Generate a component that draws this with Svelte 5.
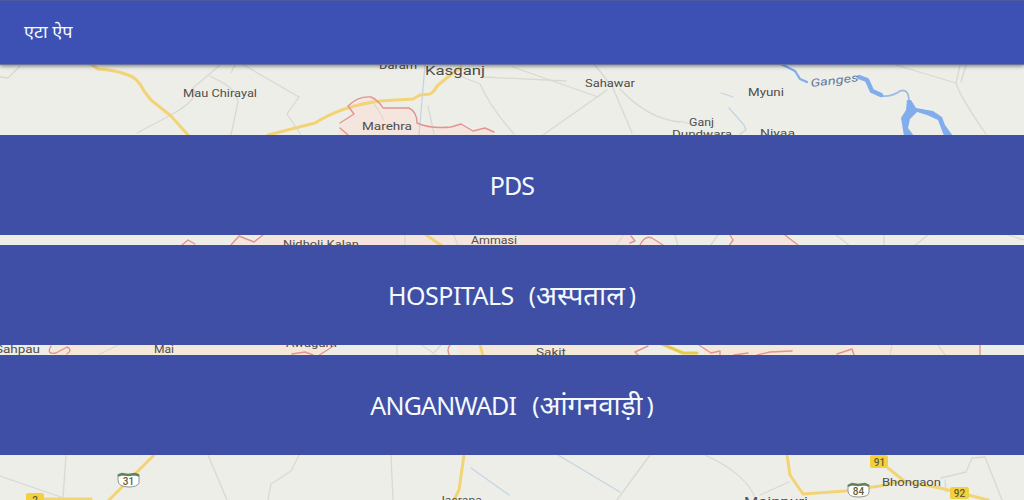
<script>
  const services = [
    { id: 'pds', en: 'PDS', hi: '' },
    { id: 'hospitals', en: 'HOSPITALS', hi: 'अस्पताल' },
    { id: 'anganwadi', en: 'ANGANWADI', hi: 'आंगनवाड़ी' }
  ];

  const places = [
    { name: 'Daram', x: 379, y: 69, w: 38, size: 10 },
    { name: 'Kasganj', x: 425, y: 75, w: 60, size: 13 },
    { name: 'Mau Chirayal', x: 183, y: 97, w: 74, size: 10.5 },
    { name: 'Marehra', x: 362, y: 130, w: 50, size: 10.5 },
    { name: 'Sahawar', x: 585, y: 87, w: 50, size: 10 },
    { name: 'Myuni', x: 748, y: 96, w: 36, size: 10.5 },
    { name: 'Ganj', x: 689, y: 126, w: 25, size: 10 },
    { name: 'Dundwara', x: 672, y: 138, w: 60, size: 10 },
    { name: 'Niyaa', x: 760, y: 137, w: 35, size: 10.5 },
    { name: 'Nidholi Kalan', x: 283, y: 248, w: 76, size: 10.5 },
    { name: 'Ammasi', x: 471, y: 244, w: 46, size: 10 },
    { name: 'Sahpau', x: -5, y: 353, w: 45, size: 10 },
    { name: 'Mai', x: 154, y: 353, w: 20, size: 10 },
    { name: 'Awagarh', x: 286, y: 347, w: 51, size: 10.5 },
    { name: 'Sakit', x: 536, y: 356, w: 30, size: 10.5 },
    { name: 'Jasrana', x: 438, y: 504, w: 44, size: 11 },
    { name: 'Mainpuri', x: 744, y: 506, w: 64, size: 13.5 },
    { name: 'Bhongaon', x: 882, y: 486, w: 59, size: 10.5 }
  ];
</script>

<div class="app">
  <svg class="map" viewBox="0 0 1024 500" aria-hidden="true">
    <rect width="1024" height="500" fill="#eeeee8" />

    <g fill="#f4e5de">
      <path d="M338 137 L340 126 L353 115 L348 107 L367 97 L382 109 L409 108 L417 124 L452 128 L460 124 L474 131 L486 128 L494 132 V137Z" />
      <path d="M182 246 L188 240 L195 245 L230 246 L238 236 L252 242 L268 234 H620 L634 236 L633 242 L628 246Z" />
      <path d="M640 246 L647 236 L664 246Z" />
      <path d="M730 234 H785 L798 246 H733Z" />
    </g>
    <g fill="#f4e8d9">
      <path d="M50 344 H330 L318 356 H55Z M455 344 H640 L635 356 H460Z M704 344 H980 V356 H704Z" />
    </g>

    <g class="line" stroke="#d9d9d3" stroke-width="1.3">
      <path d="M0 77 L8 78 L20 66 M137 133 L171 115 Q201 98 193 88 L220 65 M210 76 L225 84 Q237 92 238 102 L231 135 M235 65 L231 73 M242 64 L299 97 L287 114 L301 135" />
      <path d="M372 100 L384 120 M460 76 L480 84 Q490 107 514 134 M428 106 L434 134" />
      <path d="M483 77 L566 81 M513 67 L598 97 M543 135 L607 90 M595 65 L613 88 L632 133 M620 89 Q648 119 680 122" />
      <path d="M896 65 L956 83 L960 65 M956 83 Q960 97 986 134 M966 65 L961 82 M680 121 L694 125" />
      <path d="M405 234 V246 M454 235 L458 246 M624 234 L616 246 M675 235 L678 246 M718 235 L710 246 M835 234 L850 246 M884 235 V246 M928 235 L914 246 M1008 235 L1024 240" />
      <path d="M120 344 L100 354 M397 344 V356 M420 344 L438 356 M442 344 L431 356 M892 344 L890 356 M937 344 L946 356" />
      <path d="M0 476 L61 497 M66 455 L63 498 M208 455 L227 500 M299 455 L291 471 L271 484 L268 500 M391 455 L393 500" />
      <path d="M650 455 L617 500 M705 455 Q747 474 756 500 M941 478 L966 472 L972 458 L985 457 L1002 500 M760 495 L789 482 M945 480 L946 492" />
    </g>
    <g class="line" stroke="#c3d5e2" stroke-width="1.3">
      <path d="M425 65 L419 135 M721 93 L733 97 M729 108 L744 125 L746 130 L740 134 M471 468 L509 495 M558 455 L620 492" />
    </g>

    <g class="line" stroke="#f2d477" stroke-width="3">
      <path d="M92 65 L98 69 Q116 70 128 75 Q137 77 144 91 L151 100 L171 116 L188 135" />
      <path d="M268 135 L315 123 Q342 106 380 101 L413 99 L420 95 L430 94 Q434 92 437 86 L448 77 L461 67" />
      <path d="M425 234 L442 246 M480 344 L483 356 M154 455 L134 475 L109 500 M464 455 L459 490 L454 500" />
      <path d="M787 455 L790 475 L803 494 L845 491 L880 486 L903 481 L940 488 L988 500 M888 468 L903 480 M30 499 H91" />
    </g>
    <path class="line" stroke="#e9c94b" stroke-width="3" d="M662 344 L683 353 H697" />

    <g class="line" stroke="#e4948f" stroke-width="1.4">
      <path d="M340 123 L354 114 L348 106 Q358 96 371 97 Q378 100 383 108 L409 108 Q417 112 417 123 Q430 129 451 127 L461 124 L473 131 L485 128 L494 132 M340 128 L348 135" />
      <path d="M182 245 L188 240 L195 244 M231 245 L239 236 L254 242 L263 235 M631 236 L635 241 L630 243 M640 245 Q645 235 652 238 L663 245 M730 235 L733 240 L729 246 M785 235 L798 245" />
      <path d="M51 346 Q46 355 56 353 L67 347 Q73 350 67 354 M335 345 L318 356 M292 354 L305 352 L313 355 M450 345 Q446 350 450 356 M648 346 L635 352 L638 355 M699 345 L711 353 L720 351 V355 M734 355 L748 353 M757 355 L770 352 L792 351 M837 354 L852 349 L854 355 M980 344 V355" />
    </g>

    <g class="line" stroke="#82adec">
      <path stroke-width="2.3" d="M781 64 L795 71 L800 79 L807 82" />
      <path stroke-width="1.8" stroke="#9dbbe5" d="M881 96 Q892 97 900 91 Q909 88 909 102" />
      <path stroke-width="4.5" d="M859 77 L867 80 L872 91 L881 95" />
    </g>
    <path fill="#82adec" d="M907 100 L911 100 L916 108 L933 111 L942 117 L945 125 L953 136 H944 L938 120 L927 115 L917 112 L910 119 L908 128 L914 136 H904 L901 118 L906 110Z" />
    <text class="river" transform="translate(811 87) rotate(-7)" textLength="48" lengthAdjust="spacingAndGlyphs">Ganges</text>

    {#each places as p (p.name)}
      <text class="place" x={p.x} y={p.y} font-size={p.size} textLength={p.w} lengthAdjust="spacingAndGlyphs">{p.name}</text>
    {/each}

    <g class="route">
      <rect x="26" y="493" width="18" height="12" rx="2" fill="#f3d13c" />
      <text x="35" y="504">2</text>
      <rect x="870" y="455" width="18" height="13" rx="2" fill="#f3d13c" />
      <text x="879.5" y="465.5">91</text>
      <rect x="950" y="487" width="19" height="12" rx="2" fill="#f3d13c" />
      <text x="959.5" y="497">92</text>
      <path d="M118 475 H139 V483 Q137 487 129 487 Q118 487 118 480Z" fill="#fff" stroke="#909690" />
      <path d="M118 475.5 L122 474 L128 475 L135 474 L139 475.5" fill="none" stroke="#63825c" stroke-width="2.5" />
      <text x="128.5" y="485">31</text>
      <path d="M848 485 H869 V492 Q869 497 858 497 Q848 497 848 491Z" fill="#fff" stroke="#909690" />
      <path d="M848 486 L852 484 L858 485 L865 484 L869 486" fill="none" stroke="#63825c" stroke-width="2.5" />
      <text x="858.5" y="495">84</text>
    </g>
  </svg>

  <header><h1>एटा ऐप</h1></header>
  <main>
    {#each services as s (s.id)}
      <button class={s.id}>
        <span class="en">{s.en}</span>
        {#if s.hi}<span class="hi"><i>(</i>{s.hi}<i class="end">)</i></span>{/if}
      </button>
    {/each}
  </main>
</div>

<style>
  :global(body) { margin: 0; }
  .app {
    position: relative;
    width: 1024px;
    height: 500px;
    overflow: hidden;
    font-family: "Noto Sans", "Open Sans", sans-serif;
    color: #f5faff;
  }
  .map { position: absolute; inset: 0; }
  .line { fill: none; stroke-linejoin: round; stroke-linecap: round; }
  .place { fill: #4f4f4a; font-family: Roboto, sans-serif; font-weight: 400; }
  .river { fill: #61799b; font: italic 400 11px Roboto, sans-serif; }
  .route text { font: 500 10px Roboto, sans-serif; fill: #625c38; text-anchor: middle; }
  header {
    position: relative;
    box-sizing: border-box;
    height: 65px;
    padding: 0 24px 4px;
    display: flex;
    align-items: center;
    background: #3c51b3;
    border-top: 1px solid #4b5aa0;
    border-bottom: 1px solid #6872a0;
    box-shadow: 0 1px 4px rgba(0, 0, 0, 0.5);
  }
  h1 { margin: 0; font-size: 18px; line-height: 24px; font-weight: 400; }
  main {
    position: relative;
    display: flex;
    flex-direction: column;
    gap: 10px;
    padding-top: 70px;
  }
  button {
    box-sizing: border-box;
    height: 100px;
    padding: 0;
    border: 0;
    display: flex;
    justify-content: center;
    align-items: baseline;
    gap: 14px;
    background: #3f4fa5;
    color: inherit;
    font: 400 25px/100px "Noto Sans", "Open Sans", sans-serif;
  }
  .pds .en { letter-spacing: -0.9px; }
  .hospitals .en { letter-spacing: -0.5px; }
  .hospitals { gap: 15px; }
  .anganwadi .en { letter-spacing: -0.8px; }
  .anganwadi { gap: 16px; }
  .hi { white-space: nowrap; font-size: 27.5px; line-height: 1; }
  i { font-style: normal; font-size: 24px; vertical-align: 1px; }
  .end { margin-left: 4px; }
</style>
